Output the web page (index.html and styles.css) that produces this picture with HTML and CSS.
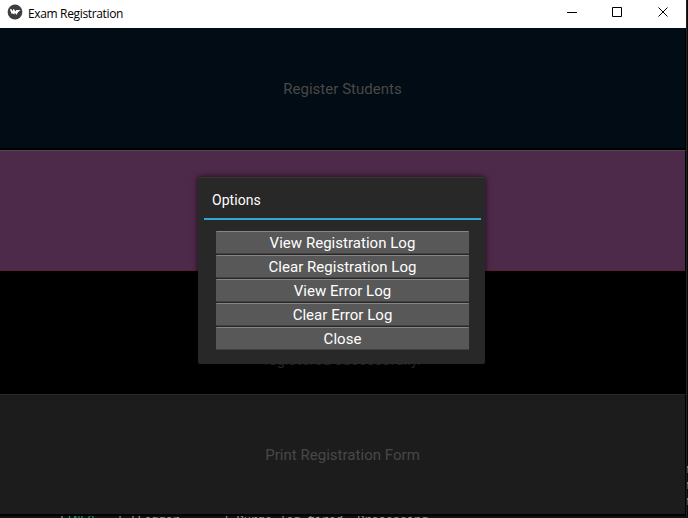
FILE: index.html
```
<!DOCTYPE html>
<html lang="en">
<head>
<meta charset="utf-8">
<title>Exam Registration</title>
<link rel="stylesheet" href="styles.css">
</head>
<body>
<div class="desktop">
  <main class="window">
    <header class="titlebar">
      <svg class="logo" width="16" height="16" viewBox="0 0 16 16"><circle cx="8" cy="8" r="7.4" fill="#3d3e40"/><path d="M2.800 5.300 4.600 5.200 5.800 7.200 6.200 5 7.600 5.700 8.400 7.500 9.200 6H13.600L11.200 8.100 9.300 10.900 8 8.800 7.300 10.500 5.600 9.200 4.800 10.200Z" fill="#fff"/></svg>
      <span class="title">Exam Registration</span>
      <svg class="controls" width="104" height="12" viewBox="0 0 104 12" fill="none" stroke="#000"><path d="M1 6.500h10M46.500 1.500h9v9h-9z"/><path d="m92.500 1.500 9 9m0-9-9 9"/></svg>
    </header>
    <section class="rows">
      <div class="row register">Register Students</div>
      <div class="row options"></div>
      <div class="row status">registered successfully.</div>
      <div class="row print">Print Registration Form</div>
    </section>
  </main>
  <aside class="edge"><i></i><i></i><i></i></aside>
  <pre class="console">[<b>INFO   </b>] [Logger      ] Purge log fired. Processing...</pre>
  <section class="popup">
    <h1>Options</h1>
    <div class="menu">
      <button>View Registration Log</button>
      <button>Clear Registration Log</button>
      <button>View Error Log</button>
      <button>Clear Error Log</button>
      <button>Close</button>
    </div>
  </section>
</div>
</body>
</html>
```
FILE: styles.css
```
* { box-sizing: border-box; }
body { margin: 0; background: #080808; }
.desktop {
  position: relative;
  width: 688px;
  height: 518px;
  overflow: hidden;
  display: grid;
  grid-template-columns: 686px 2px;
  grid-template-rows: 516px 2px;
  font-family: Roboto, "Liberation Sans", sans-serif;
}
.window { background: #000; }
.titlebar {
  height: 28px;
  display: flex;
  align-items: center;
  background: #fff;
  padding: 0 16px 4px 7px;
}
.title {
  margin-left: 5px;
  padding-top: 2px;
  font: 12px "Open Sans", sans-serif;
  color: #000;
  letter-spacing: -0.35px;
}
.controls { margin-left: auto; }
.rows { display: grid; grid-template-rows: 122px 122px 122px 122px; }
.row {
  width: 686px;
  display: flex;
  align-items: center;
  justify-content: center;
  font-size: 15px;
  letter-spacing: 0.03px;
  color: #484848;
  border: 0 solid #000;
  border-right-width: 1px;
}
.register { background: #020c14; border-bottom: 2px solid #000; padding-top: 2px; }
.options { background: #4e2a4a; border-top: 1px solid #4d4b49; border-bottom: 1px solid #000; box-shadow: inset 0 -1px #5c2034; }
.status { align-items: flex-end; padding-bottom: 25px; color: #303030; }
.print { background: #1c1c1c; border-top: 1px solid #282828; border-bottom: 2px solid #000; }
.edge { background: #080808; border-left: 1px solid #24211f; padding-top: 466px; }
.edge i { display: block; height: 7px; margin-bottom: 9px; background: linear-gradient(#85745d 2px, #294e68 2px); }
.console {
  grid-column: 1 / 3;
  height: 2px;
  margin: 0;
  padding-left: 59px;
  overflow: hidden;
  background: #101113;
  color: #999;
  font: 12px/10px "Liberation Mono", monospace;
  letter-spacing: -0.1px;
}
.console b { color: #189c78; font-weight: normal; }
.popup {
  position: absolute;
  left: 198px;
  top: 177px;
  width: 287px;
  height: 187px;
  padding: 14px 4px 0 6px;
  background: #282828;
  border-radius: 2px;
  box-shadow: 0 0 6px rgba(0, 0, 0, .75), inset 0 1px #353535;
}
.popup h1 {
  height: 29px;
  margin: 0;
  padding-left: 8px;
  border-bottom: 2px solid #2fa7d4;
  color: #fff;
  font-size: 14px;
  font-weight: 400;
  line-height: 19px;
  letter-spacing: 0.05px;
}
.menu { display: grid; gap: 1px; margin: 11px 12px 0 12px; }
.menu button {
  height: 23px;
  padding: 1px 0 0;
  border: 0;
  border-top: 1px solid #858585;
  border-bottom: 1px solid #414141;
  border-radius: 1px;
  background: #585858;
  color: #fff;
  font: 15px/20px Roboto, sans-serif;
  letter-spacing: 0.03px;
}
```
